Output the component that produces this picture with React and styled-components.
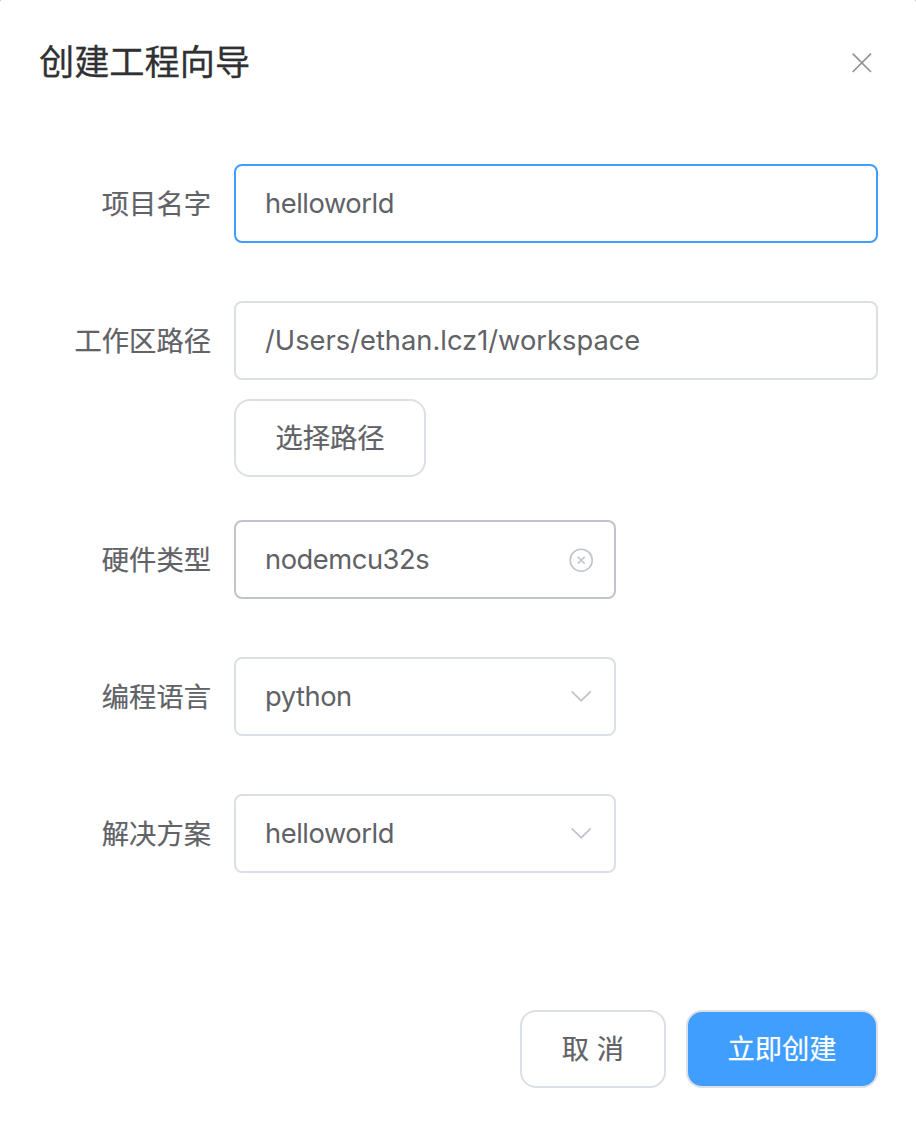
import React from 'react';
import styled, { createGlobalStyle } from 'styled-components';

const GlobalStyle = createGlobalStyle`
  * { box-sizing: border-box; }
  body { margin: 0; background: #b4b4b4; }
  button, input { font: inherit; color: inherit; }
`;

const Dialog = styled.main`
  width: 916px;
  height: 1125px;
  padding: 0 38px 37px 39px;
  display: flex;
  flex-direction: column;
  background: #fff;
  border-radius: 2px 2px 0 0;
  color: #606266;
  font-family: Inter, "Noto Sans CJK SC", sans-serif;
  font-size: 27.3px;
`;

const Header = styled.header`
  height: 124px;
  padding-right: 5px;
  display: flex;
  align-items: center;
  justify-content: space-between;
`;

const Title = styled.h1`
  margin: 0;
  font-size: 35.2px;
  font-weight: 400;
  line-height: 48px;
  color: #303133;
  -webkit-text-stroke: 0.3px currentColor;
`;

const CloseButton = styled.button`
  display: flex;
  padding: 1px 0 0;
  border: 0;
  background: none;
  color: #909399;
`;

const Form = styled.form`
  padding-top: 40px;
  flex: 1;
  display: flex;
  flex-direction: column;
`;

const Field = styled.div`
  display: flex;
  align-items: flex-start;
  margin-bottom: ${(p) => p.$gap ?? 58}px;
`;

const Label = styled.label`
  width: 172px;
  height: 79px;
  margin-right: 23px;
  line-height: 81px;
  text-align: right;
  -webkit-text-stroke: 0.2px currentColor;
`;

const Controls = styled.div`
  flex: 1;
  display: flex;
  flex-direction: column;
  align-items: flex-start;
  gap: 19px;
`;

const borders = { active: '#409eff', hover: '#c0c4cc', normal: '#dcdfe6' };

const InputBox = styled.div`
  width: ${(p) => (p.$wide ? '644px' : '382px')};
  height: 79px;
  padding: 0 20px 0 29px;
  display: flex;
  align-items: center;
  border: 2px solid ${(p) => borders[p.$state]};
  border-radius: 8px;
  color: #c0c4cc;
`;

const Input = styled.input`
  flex: 1;
  min-width: 0;
  padding: 0;
  border: 0;
  outline: 0;
  background: none;
  color: #606266;
  letter-spacing: ${(p) => p.$spacing ?? -0.45}px;
`;

const Button = styled.button`
  width: ${(p) => p.$width}px;
  height: 78px;
  padding: 0 0 4px;
  border: 2px solid #dcdfe6;
  border-radius: 16px;
  background: ${(p) => (p.$primary ? '#409eff' : '#fff')};
  color: ${(p) => (p.$primary ? '#fff' : '#606266')};
  -webkit-text-stroke: 0.2px currentColor;
`;

const Footer = styled.footer`
  display: flex;
  justify-content: flex-end;
  gap: 20px;
`;

const CloseIcon = () => (
  <svg width="22" height="22" viewBox="0 0 22 22" fill="none" stroke="currentColor" strokeWidth="1.7">
    <path d="M1.7 1.7 20 20M20 1.7 1.7 20" />
  </svg>
);

const ClearIcon = () => (
  <svg width="26" height="26" viewBox="0 0 26 26" fill="none" stroke="currentColor" strokeWidth="1.6">
    <circle cx="13.2" cy="13.2" r="11" />
    <path d="m9.7 9.7 7 7M16.7 9.7l-7 7" />
  </svg>
);

const ArrowIcon = () => (
  <svg width="26" height="26" viewBox="0 0 26 26" fill="none" stroke="currentColor" strokeWidth="1.7">
    <path d="m3.6 7.3 9.6 9.4 9.6-9.4" />
  </svg>
);

export default function App() {
  return (
    <>
      <GlobalStyle />
      <Dialog>
        <Header>
          <Title>创建工程向导</Title>
          <CloseButton aria-label="关闭"><CloseIcon /></CloseButton>
        </Header>
        <Form>
          <Field>
            <Label>项目名字</Label>
            <Controls>
              <InputBox $wide $state="active"><Input defaultValue="helloworld" /></InputBox>
            </Controls>
          </Field>
          <Field $gap={43}>
            <Label>工作区路径</Label>
            <Controls>
              <InputBox $wide $state="normal"><Input $spacing={0} defaultValue="/Users/ethan.lcz1/workspace" /></InputBox>
              <Button type="button" $width={192}>选择路径</Button>
            </Controls>
          </Field>
          <Field>
            <Label>硬件类型</Label>
            <Controls>
              <InputBox $state="hover"><Input readOnly value="nodemcu32s" /><ClearIcon /></InputBox>
            </Controls>
          </Field>
          <Field>
            <Label>编程语言</Label>
            <Controls>
              <InputBox $state="normal"><Input readOnly value="python" /><ArrowIcon /></InputBox>
            </Controls>
          </Field>
          <Field>
            <Label>解决方案</Label>
            <Controls>
              <InputBox $state="normal"><Input readOnly value="helloworld" /><ArrowIcon /></InputBox>
            </Controls>
          </Field>
        </Form>
        <Footer>
          <Button $width={146}>取 消</Button>
          <Button $width={192} $primary>立即创建</Button>
        </Footer>
      </Dialog>
    </>
  );
}
